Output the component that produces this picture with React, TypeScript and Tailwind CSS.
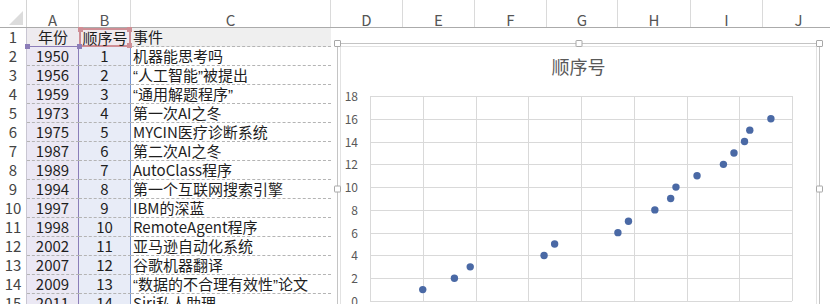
const rows: [string, string, string][] = [
  ["1950", "1", "机器能思考吗"],
  ["1956", "2", "“人工智能”被提出"],
  ["1959", "3", "“通用解题程序”"],
  ["1973", "4", "第一次AI之冬"],
  ["1975", "5", "MYCIN医疗诊断系统"],
  ["1987", "6", "第二次AI之冬"],
  ["1989", "7", "AutoClass程序"],
  ["1994", "8", "第一个互联网搜索引擎"],
  ["1997", "9", "IBM的深蓝"],
  ["1998", "10", "RemoteAgent程序"],
  ["2002", "11", "亚马逊自动化系统"],
  ["2007", "12", "谷歌机器翻译"],
  ["2009", "13", "“数据的不合理有效性”论文"],
  ["2011", "14", "Siri私人助理"],
];

const years = [1950, 1956, 1959, 1973, 1975, 1987, 1989, 1994, 1997, 1998, 2002, 2007, 2009, 2011, 2012, 2016];

const columns = [
  { label: "A", w: "w-[52px]" },
  { label: "B", w: "w-[52px]" },
  { label: "C", w: "w-[200px]" },
  { label: "D", w: "w-[72px]" },
  { label: "E", w: "w-[72px]" },
  { label: "F", w: "w-[72px]" },
  { label: "G", w: "w-[71px]" },
  { label: "H", w: "w-[73px]" },
  { label: "I", w: "w-[72px]" },
  { label: "J", w: "w-[72px]" },
];

const cellBase = "h-[19px] border-b border-dashed border-[#b4b4b4] leading-[18px]";

// curly quotes in the sheet are narrow, so set them in a latin face
function EventText({ text }: { text: string }) {
  const parts = text.split(/([“”])/);
  return (
    <>
      {parts.map((p, i) =>
        p === "“" || p === "”" ? (
          <span key={i} className="font-['Liberation_Sans',sans-serif]">
            {p}
          </span>
        ) : (
          <span key={i}>{p}</span>
        ),
      )}
    </>
  );
}

function Handle({ className }: { className: string }) {
  return <span className={`absolute h-[7px] w-[7px] rounded-[1px] border border-[#a8a8a8] bg-white ${className}`} />;
}

function Chart() {
  const plotW = 422;
  const plotH = 205;
  const xStep = plotW / 8;
  const yStep = plotH / 9;
  return (
    <div className="relative h-[292px] w-[483px] border border-[#c4c4c4] p-[2px]">
      <div className="h-full border border-[#e2e2e2] bg-white">
        <div className="mt-[7px] text-center text-[18px] leading-[24px] text-[#595959]">顺序号</div>
        <div className="mt-[11px] flex items-start">
          <div className="flex h-[219px] w-[17px] flex-col justify-between text-right text-[12px] leading-[14px] text-[#595959]">
            {[18, 16, 14, 12, 10, 8, 6, 4, 2, 0].map((n) => (
              <span key={n}>{n}</span>
            ))}
          </div>
          <svg width={plotW + 1} height={plotH + 1} className="ml-[12px] mt-[7px] block">
            {Array.from({ length: 10 }, (_, i) => {
              const y = Math.round(i * yStep) + 0.5;
              return <line key={`h${i}`} x1={0} x2={plotW} y1={y} y2={y} stroke="#d9d9d9" strokeWidth={1} />;
            })}
            {Array.from({ length: 9 }, (_, i) => {
              const x = Math.round(i * xStep) + 0.5;
              return <line key={`v${i}`} x1={x} x2={x} y1={0} y2={plotH} stroke="#d9d9d9" strokeWidth={1} />;
            })}
            {years.map((yr, i) => (
              <circle
                key={yr}
                cx={(yr - 1940) * (xStep / 10)}
                cy={plotH - (i + 1) * (yStep / 2)}
                r={3.7}
                fill="#4a69a5"
              />
            ))}
          </svg>
        </div>
      </div>
      <Handle className="-left-[4px] -top-[4px]" />
      <Handle className="-top-[4px] left-1/2 -translate-x-1/2" />
      <Handle className="-right-[4px] -top-[4px]" />
      <Handle className="-left-[4px] top-1/2 -translate-y-1/2" />
      <Handle className="-right-[4px] top-1/2 -translate-y-1/2" />
    </div>
  );
}

export default function App() {
  return (
    <div className="relative h-[304px] w-[830px] overflow-hidden bg-white font-['Noto_Sans_CJK_SC',sans-serif] text-[15px] text-[#1e1e1e]">
      <div className="flex h-[28px] border-b border-[#ababab]">
        <div className="relative w-[27px] shrink-0 border-r border-[#d4d4d4]">
          <svg width="26" height="27" className="block">
            <polygon points="23,11 23,25 9,25" fill="#dcdcdc" />
          </svg>
        </div>
        {columns.map((c) => (
          <div
            key={c.label}
            className={`${c.w} flex shrink-0 items-center justify-center border-r border-[#dadada] pt-[13px] text-[15px] text-[#555]`}
          >
            {c.label}
          </div>
        ))}
      </div>

      <div className="flex items-start">
        <div className="grid w-[331px] shrink-0 grid-cols-[27px_52px_52px_200px] content-start">
          <div className="h-[19px] border-r border-[#c9c6d2] text-center leading-[18px] text-[#444]">1</div>
          <div className="relative h-[19px] border-b border-[#8c7db8] bg-[#eeebef] text-center leading-[18px]">
            年份
            <span className="absolute -bottom-[3px] -left-[2px] h-[5px] w-[5px] bg-[#8c7db8]" />
            <span className="absolute -bottom-[3px] -right-[3px] z-10 h-[5px] w-[5px] bg-[#8c7db8]" />
          </div>
          <div className="relative h-[19px] border-2 border-[#cf8e95] bg-[#f1e9ee] text-center leading-[15px]">
            顺序号
            <span className="absolute -left-[3px] -top-[3px] h-[5px] w-[5px] bg-[#cf8e95]" />
            <span className="absolute -right-[3px] -top-[3px] h-[5px] w-[5px] bg-[#cf8e95]" />
            <span className="absolute -bottom-[3px] -right-[3px] h-[5px] w-[5px] bg-[#cf8e95]" />
          </div>
          <div className={`${cellBase} bg-[#efefef] pl-[2px]`}>事件</div>

          {rows.map(([year, seq, event], i) => (
            <div key={year} className="contents">
              <div className="h-[19px] border-r border-[#c9c6d2] text-center leading-[18px] text-[#444]">{i + 2}</div>
              <div className={`${cellBase} bg-[#ebe8f4] text-center`}>
                <div className="h-full border-r border-solid border-[#8c7db8]">{year}</div>
              </div>
              <div className={`${cellBase} bg-[#e8ecf7] text-center`}>
                <div className="h-full border-r border-solid border-[#7393cf]">{seq}</div>
              </div>
              <div className={`${cellBase} whitespace-nowrap pl-[2px]`}>
                <EventText text={event} />
              </div>
            </div>
          ))}
        </div>

        <div className="flex-1 pl-[6px] pt-[15px]">
          <Chart />
        </div>
      </div>
    </div>
  );
}
